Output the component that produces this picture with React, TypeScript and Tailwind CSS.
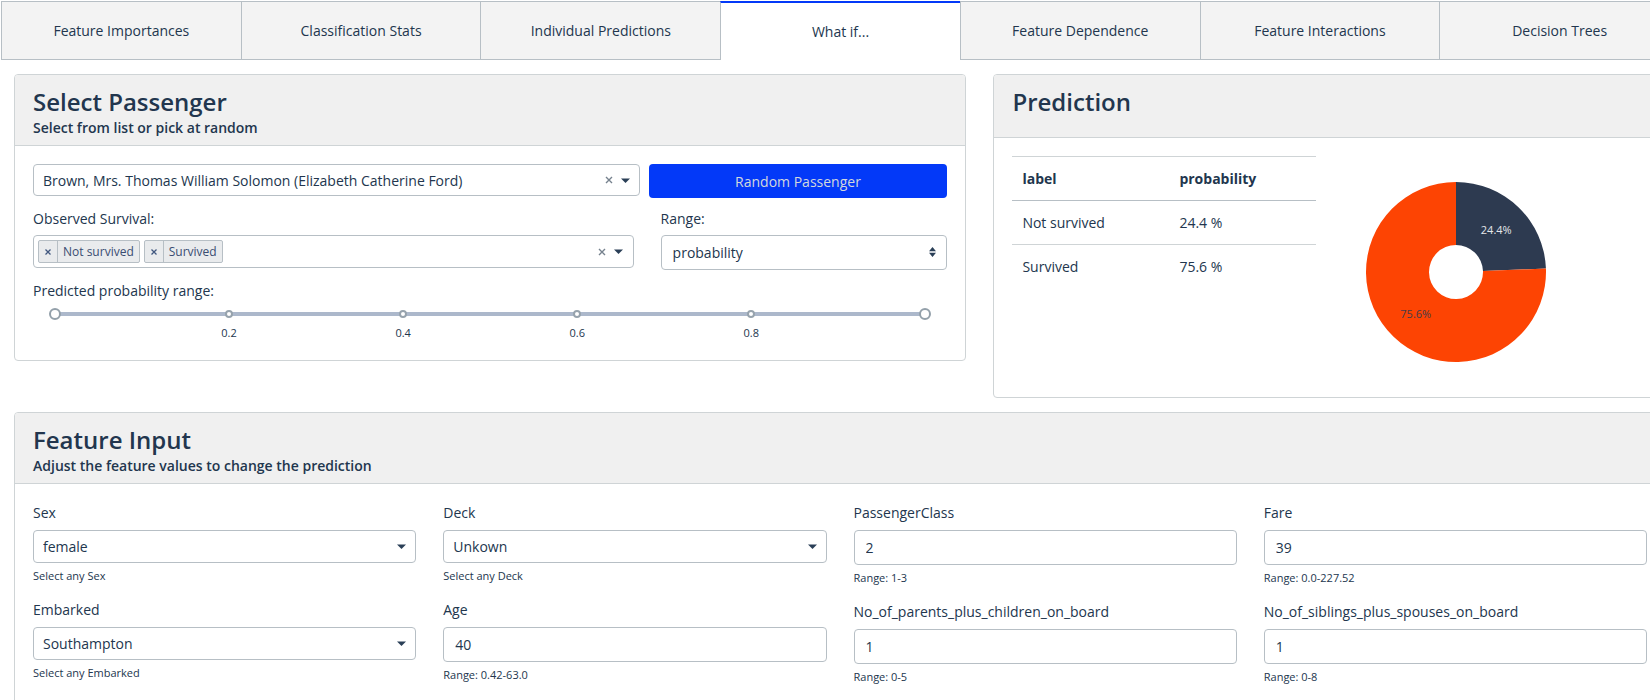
import React, { useState } from "react";

const tabs = [
  "Feature Importances",
  "Classification Stats",
  "Individual Predictions",
  "What if...",
  "Feature Dependence",
  "Feature Interactions",
  "Decision Trees",
];

const outcomes = [
  { label: "Not survived", value: 24.4, color: "#2d3a50" },
  { label: "Survived", value: 75.6, color: "#fd4403" },
];

type Field = { name: string; value: string; help: string; options?: string[] };

const featureColumns: Field[][] = [
  [
    { name: "Sex", value: "female", help: "Select any Sex", options: ["female", "male"] },
    {
      name: "Embarked",
      value: "Southampton",
      help: "Select any Embarked",
      options: ["Southampton", "Cherbourg", "Queenstown"],
    },
  ],
  [
    { name: "Deck", value: "Unkown", help: "Select any Deck", options: ["Unkown", "A", "B", "C", "D"] },
    { name: "Age", value: "40", help: "Range: 0.42-63.0" },
  ],
  [
    { name: "PassengerClass", value: "2", help: "Range: 1-3" },
    { name: "No_of_parents_plus_children_on_board", value: "1", help: "Range: 0-5" },
  ],
  [
    { name: "Fare", value: "39", help: "Range: 0.0-227.52" },
    { name: "No_of_siblings_plus_spouses_on_board", value: "1", help: "Range: 0-8" },
  ],
];

function Caret() {
  return (
    <svg className="pointer-events-none h-[5px] w-[9px]" viewBox="0 0 9 5" aria-hidden="true">
      <path d="M0 0.5H9L4.5 5Z" fill="#2a3f57" />
    </svg>
  );
}

function Cross() {
  return (
    <svg className="size-2" viewBox="0 0 8 8" aria-hidden="true">
      <path d="M1 1L7 7M7 1L1 7" stroke="#76828e" strokeWidth="1.4" />
    </svg>
  );
}

function Card({
  title,
  subtitle,
  className = "",
  children,
}: {
  title: string;
  subtitle?: string;
  className?: string;
  children: React.ReactNode;
}) {
  return (
    <section className={`overflow-hidden rounded-[4px] border border-[#cfd4d6] bg-white ${className}`}>
      <header
        className={`border-b border-[#cfd4d6] bg-[#f0f0f0] px-[18px] pt-[11px] ${subtitle ? "pb-[7px]" : "pb-[19px]"}`}
      >
        <h3 className="text-[24px] leading-8 font-semibold">{title}</h3>
        {subtitle && <h6 className="text-[14px] leading-5 font-semibold">{subtitle}</h6>}
      </header>
      <div className="p-[18px]">{children}</div>
    </section>
  );
}

function RangeSlider() {
  const [low, setLow] = useState(0);
  const [high, setHigh] = useState(1);
  const thumb =
    "pointer-events-none absolute top-0 -left-[6px] h-6 w-[calc(100%+12px)] appearance-none bg-transparent [&::-webkit-slider-thumb]:pointer-events-auto [&::-webkit-slider-thumb]:size-3 [&::-webkit-slider-thumb]:appearance-none [&::-webkit-slider-thumb]:rounded-full [&::-webkit-slider-thumb]:border-2 [&::-webkit-slider-thumb]:border-solid [&::-webkit-slider-thumb]:border-[#93a0aa] [&::-webkit-slider-thumb]:bg-white";
  return (
    <div className="px-[22px] pb-[2px]">
      <div className="relative flex h-6 items-center">
        <div className="h-1 w-full rounded-full bg-[#acb8cb]" />
        {[20, 40, 60, 80].map((p) => (
          <span
            key={p}
            className="absolute top-2 size-2 -translate-x-1/2 rounded-full border-2 border-[#97a3ad] bg-white"
            style={{ left: `${p}%` }}
          />
        ))}
        <input
          type="range"
          aria-label="Lowest predicted probability"
          min={0}
          max={1}
          step={0.01}
          value={low}
          onChange={(e) => setLow(Math.min(Number(e.target.value), high))}
          className={thumb}
        />
        <input
          type="range"
          aria-label="Highest predicted probability"
          min={0}
          max={1}
          step={0.01}
          value={high}
          onChange={(e) => setHigh(Math.max(Number(e.target.value), low))}
          className={thumb}
        />
      </div>
      <div className="grid grid-cols-10 text-center text-[11px] leading-[14px]">
        {["0.2", "0.4", "0.6", "0.8"].map((m, i) => (
          <span key={m} className={i === 0 ? "col-span-2 col-start-2" : "col-span-2"}>
            {m}
          </span>
        ))}
      </div>
    </div>
  );
}

function SelectPassenger() {
  const [tags, setTags] = useState(["Not survived", "Survived"]);
  return (
    <Card title="Select Passenger" subtitle="Select from list or pick at random" className="col-span-7">
      <div className="grid grid-cols-3 items-start gap-x-[9px]">
        <div className="relative col-span-2">
          <select
            aria-label="Passenger"
            className="h-8 w-full appearance-none rounded-[4px] border border-[#b7bfc5] bg-white pr-12 pl-[9px] text-[14px]"
          >
            <option>Brown, Mrs. Thomas William Solomon (Elizabeth Catherine Ford)</option>
          </select>
          <div className="pointer-events-none absolute inset-y-0 right-[10px] flex items-center gap-2">
            <button type="button" aria-label="Clear passenger" className="pointer-events-auto">
              <Cross />
            </button>
            <Caret />
          </div>
        </div>
        <button type="button" className="h-[34px] rounded-[4px] bg-[#0339f8] text-[14px] text-[#d3d8dc]">
          Random Passenger
        </button>
      </div>

      <div className="mt-[10px] grid grid-cols-3 gap-x-[27px]">
        <div className="col-span-2">
          <label htmlFor="observed" className="mb-[5px] block text-[14px] leading-[22px]">
            Observed Survival:
          </label>
          <div className="flex h-[33px] items-center rounded-[4px] border border-[#b7bfc5] pr-[10px] pl-1">
            {tags.map((t) => (
              <span
                key={t}
                className="mr-1 flex h-[23px] items-center rounded-[2px] border border-[#b7bfc5] bg-[#e9ebed] text-[12px]"
              >
                <button
                  type="button"
                  aria-label={`Remove ${t}`}
                  onClick={() => setTags(tags.filter((x) => x !== t))}
                  className="flex h-full w-[19px] items-center justify-center border-r border-[#b7bfc5]"
                >
                  <svg className="size-[6px]" viewBox="0 0 6 6" aria-hidden="true">
                    <path d="M0.5 0.5L5.5 5.5M5.5 0.5L0.5 5.5" stroke="#40577f" strokeWidth="1.3" />
                  </svg>
                </button>
                <span className="px-[5px] text-[#3a4d72]">{t}</span>
              </span>
            ))}
            <input id="observed" type="text" className="min-w-0 flex-1 bg-transparent outline-none" />
            <button type="button" aria-label="Clear observed survival" className="mr-2" onClick={() => setTags([])}>
              <Cross />
            </button>
            <Caret />
          </div>
        </div>
        <div>
          <label htmlFor="range" className="mb-[5px] block text-[14px] leading-[22px]">
            Range:
          </label>
          <div className="relative">
            <select
              id="range"
              className="block h-[35px] w-full appearance-none rounded-[4px] border border-[#b7bfc5] bg-white pr-8 pl-[11px] text-[14px]"
            >
              <option>probability</option>
              <option>percentile</option>
            </select>
            <svg
              className="pointer-events-none absolute top-3 right-[11px] h-[10px] w-[7px]"
              viewBox="0 0 7 10"
              aria-hidden="true"
            >
              <path d="M0 4.2H7L3.5 0ZM0 5.8H7L3.5 10Z" fill="#2a3f57" />
            </svg>
          </div>
        </div>
      </div>

      <div className="mt-[10px]" role="group" aria-labelledby="probability-range">
        <p id="probability-range" className="text-[14px] leading-[22px]">
          Predicted probability range:
        </p>
        <RangeSlider />
      </div>
    </Card>
  );
}

function Donut() {
  const cx = 113;
  const cy = 116;
  const outer = 90;
  const inner = 27;
  const at = (r: number, share: number) => {
    const a = share * 2 * Math.PI;
    return `${(cx + r * Math.sin(a)).toFixed(2)} ${(cy - r * Math.cos(a)).toFixed(2)}`;
  };
  let start = 0;
  return (
    <svg className="h-[223px] w-[223px]" viewBox="0 0 223 223" role="img" aria-label="Prediction shares">
      {outcomes.map((o, i) => {
        const from = start;
        const to = start + o.value / 100;
        start = to;
        const large = to - from > 0.5 ? 1 : 0;
        const mid = ((from + to) / 2) * 2 * Math.PI;
        return (
          <g key={o.label}>
            <path
              d={`M${at(outer, from)}A${outer} ${outer} 0 ${large} 1 ${at(outer, to)}L${at(inner, to)}A${inner} ${inner} 0 ${large} 0 ${at(inner, from)}Z`}
              fill={o.color}
            />
            <text
              x={cx + 58 * Math.sin(mid)}
              y={cy - 58 * Math.cos(mid) + 4}
              textAnchor="middle"
              fontSize="11"
              fill={i === 0 ? "#e4e7ea" : "#443c4a"}
            >
              {`${o.value}%`}
            </text>
          </g>
        );
      })}
    </svg>
  );
}

function Prediction() {
  return (
    <Card title="Prediction" className="col-span-5">
      <div className="grid grid-cols-2 items-start gap-x-[27px]">
        <table className="w-full table-fixed text-left text-[14px]">
          <thead>
            <tr className="h-11 border-t border-b border-t-[#cfd4d6] border-b-[#b7bfc5]">
              <th className="w-[157px] pl-[10px] font-bold">label</th>
              <th className="pl-[10px] font-bold">probability</th>
            </tr>
          </thead>
          <tbody>
            {outcomes.map((o) => (
              <tr key={o.label} className="h-11 border-b border-[#cfd4d6] last:border-b-0">
                <td className="pl-[10px]">{o.label}</td>
                <td className="pl-[10px]">{o.value} %</td>
              </tr>
            ))}
          </tbody>
        </table>
        <Donut />
      </div>
    </Card>
  );
}

function FeatureField({ field }: { field: Field }) {
  return (
    <div>
      <label htmlFor={field.name} className="mb-[6px] block text-[14px] leading-[22px]">
        {field.name}
      </label>
      {field.options ? (
        <div className="relative">
          <select
            id={field.name}
            defaultValue={field.value}
            className="block h-[33px] w-full appearance-none rounded-[4px] border border-[#b7bfc5] bg-white pr-8 pl-[9px] text-[14px]"
          >
            {field.options.map((o) => (
              <option key={o}>{o}</option>
            ))}
          </select>
          <div className="pointer-events-none absolute inset-y-0 right-[10px] flex items-center">
            <Caret />
          </div>
        </div>
      ) : (
        <input
          id={field.name}
          type="text"
          inputMode="decimal"
          defaultValue={field.value}
          className="block h-[35px] w-full rounded-[4px] border border-[#b7bfc5] px-[11px] text-[14px]"
        />
      )}
      <small className="mt-1 block text-[11px] leading-[18px]">{field.help}</small>
    </div>
  );
}

export default function App() {
  const [active, setActive] = useState("What if...");
  return (
    <div className="overflow-x-clip bg-white font-['Open_Sans','Noto_Sans',sans-serif] text-[#22364e]">
      <div className="w-[calc(100%+30px)]">
        <nav role="tablist" className="mx-px mt-px grid grid-cols-7">
          {tabs.map((t) => (
            <button
              key={t}
              type="button"
              role="tab"
              aria-selected={t === active}
              onClick={() => setActive(t)}
              className={
                t === active
                  ? "h-[59px] border-t-2 border-l border-t-[#0339f8] border-l-[#b7bfc5] bg-white text-[14px]"
                  : "h-[59px] border-y border-l border-[#b7bfc5] bg-[#f3f3f3] text-[14px]"
              }
            >
              {t}
            </button>
          ))}
        </nav>
        <main className="p-[14px]">
          <div className="grid grid-cols-12 items-start gap-x-[27px]">
            <SelectPassenger />
            <Prediction />
          </div>
          <Card title="Feature Input" subtitle="Adjust the feature values to change the prediction" className="mt-[14px]">
            <div className="grid grid-cols-4 gap-x-[27px]">
              {featureColumns.map((fields) => (
                <div key={fields[0].name} className="flex flex-col gap-[14px]">
                  {fields.map((f) => (
                    <FeatureField key={f.name} field={f} />
                  ))}
                </div>
              ))}
            </div>
          </Card>
        </main>
      </div>
    </div>
  );
}
